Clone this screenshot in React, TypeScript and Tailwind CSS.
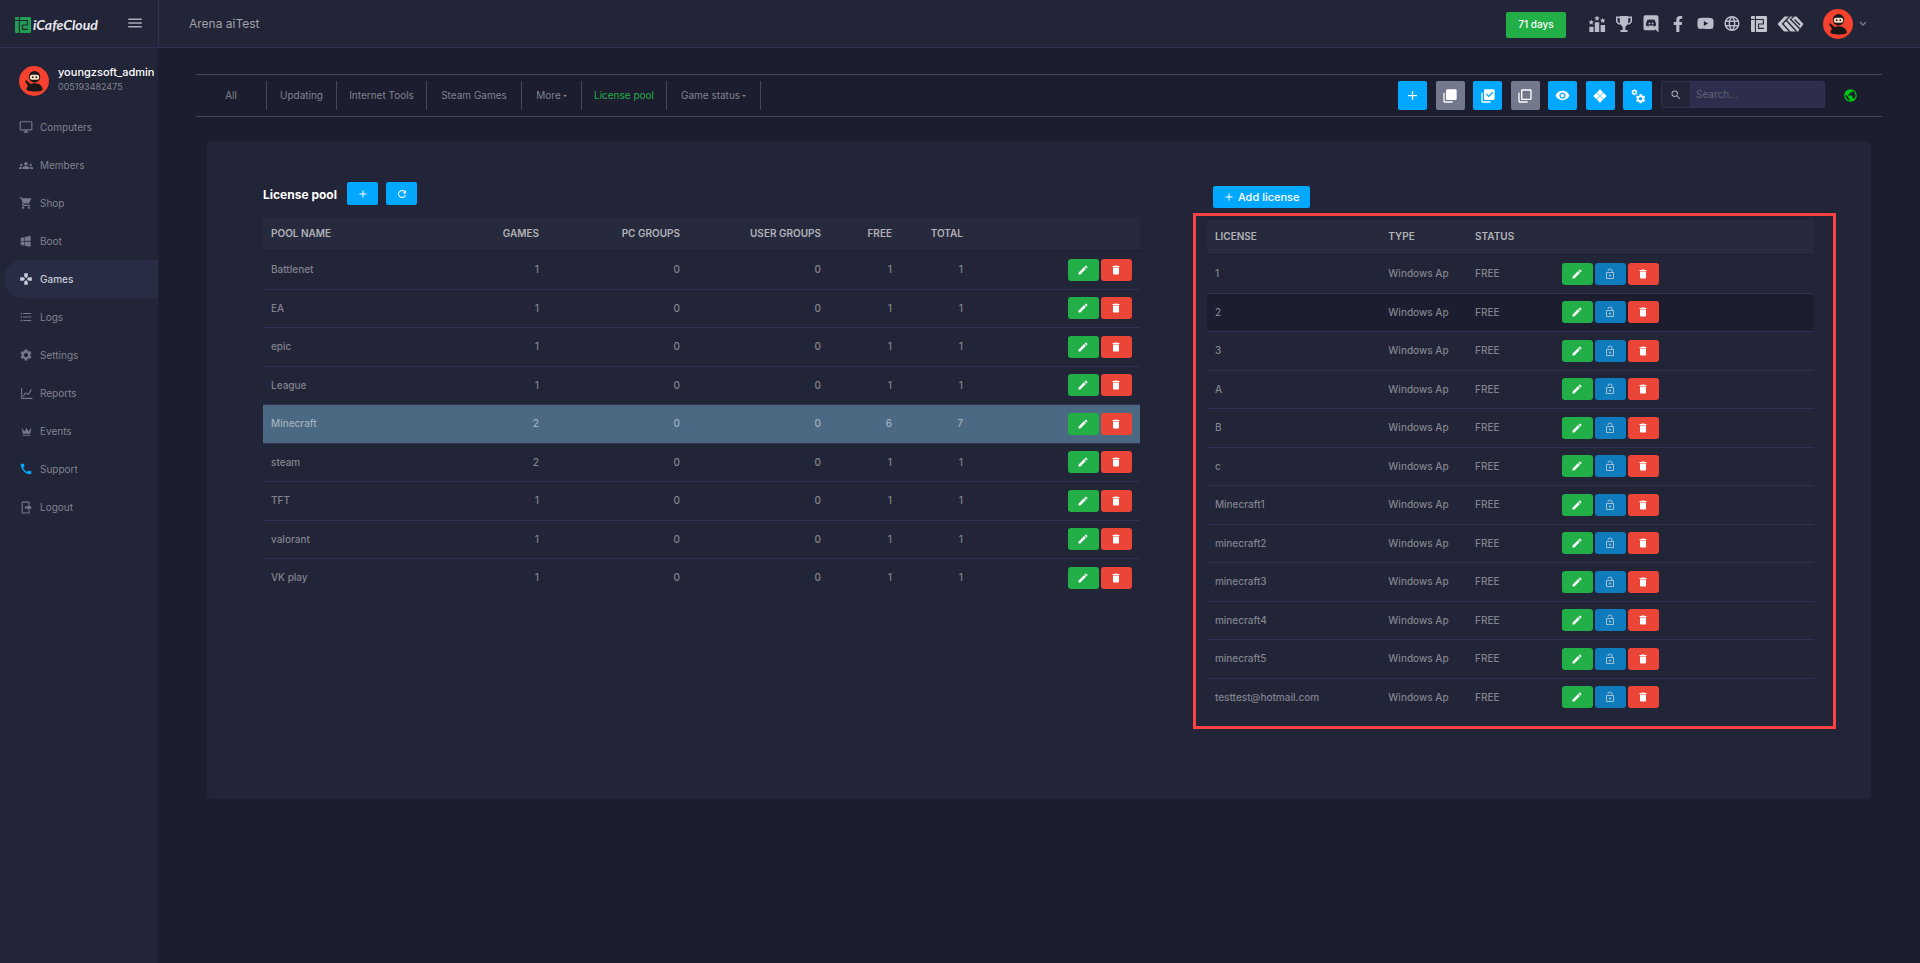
import React from 'react';
import {
  MdAdd, MdCall, MdDelete, MdGroups, MdLanguage, MdMenu, MdOutlineLockOpen, MdPublic, MdRefresh,
  MdSearch, MdSettings, MdShoppingCart, MdGames, MdFormatListBulleted, MdRemoveRedEye,
} from 'react-icons/md';
import { FaFacebookF, FaYoutube } from 'react-icons/fa';

const paths = {
  pencil:
    'M20.71,7.04C21.1,6.65 21.1,6 20.71,5.63L18.37,3.29C18,2.9 17.35,2.9 16.96,3.29L15.12,5.12L18.87,8.87M3,17.25V21H6.75L17.81,9.93L14.06,6.18L3,17.25Z',
  monitor:
    'M21,16H3V4H21M21,2H3C1.89,2 1,2.89 1,4V16A2,2 0 0,0 3,18H10V20H8V22H16V20H14V18H21A2,2 0 0,0 23,16V4C23,2.89 22.1,2 21,2Z',
  windows:
    'M3,12V6.75L9,5.43V11.91L3,12M20,3V11.75L10,11.9V5.21L20,3M3,13L9,13.09V19.9L3,18.75V13M20,13.25V22L10,20.09V13.1L20,13.25Z',
  chart:
    'M2,2H4V20H23V22H2V2M5,17L9.5,9.5L15,12.5L20,4L22,5L15.8,15.3L10.2,12.2L6.8,18Z',
  crown:
    'M5,16L3,5L8.5,12L12,5L15.5,12L21,5L19,16H5M19,19A1,1 0 0,1 18,20H6A1,1 0 0,1 5,19V18H19V19Z',
  logout:
    'M5,1H16A2,2 0 0,1 18,3V7H16V3H5V21H16V17H18V21A2,2 0 0,1 16,23H5A2,2 0 0,1 3,21V3A2,2 0 0,1 5,1M15,7L22,12L15,17V14H9V10H15Z',
  stackFilled:
    'M22,16A2,2 0 0,1 20,18H8C6.89,18 6,17.1 6,16V4C6,2.89 6.89,2 8,2H20A2,2 0 0,1 22,4V16M16,20V22H4A2,2 0 0,1 2,20V7H4V20H16Z',
  stackChecked:
    'M22,16A2,2 0 0,1 20,18H8C6.89,18 6,17.1 6,16V4C6,2.89 6.89,2 8,2H20A2,2 0 0,1 22,4V16M16,20V22H4A2,2 0 0,1 2,20V7H4V20H16M13,14L20,7L18.59,5.59L13,11.17L9.91,8.09L8.5,9.5L13,14Z',
  stackOutline:
    'M20,16V4H8V16H20M22,16A2,2 0 0,1 20,18H8C6.89,18 6,17.1 6,16V4C6,2.89 6.89,2 8,2H20A2,2 0 0,1 22,4V16M16,20V22H4A2,2 0 0,1 2,20V7H4V20H16Z',
  diamonds:
    'M12,0.600L17.400,6L12,11.400L6.600,6ZM12,12.600L17.400,18L12,23.400L6.600,18ZM6,6.600L11.400,12L6,17.400L0.600,12ZM18,6.600L23.400,12L18,17.400L12.600,12Z',
  cogs:
    'M15.9,18.45C17.25,18.45 18.35,17.35 18.35,16C18.35,14.65 17.25,13.55 15.9,13.55C14.54,13.55 13.45,14.65 13.45,16C13.45,17.35 14.54,18.45 15.9,18.45M21.1,16.68L22.58,17.84C22.71,17.95 22.75,18.13 22.66,18.29L21.26,20.71C21.17,20.86 21,20.92 20.83,20.86L19.09,20.16C18.73,20.44 18.33,20.67 17.91,20.85L17.64,22.7C17.62,22.87 17.47,23 17.3,23H14.5C14.32,23 14.18,22.87 14.15,22.7L13.89,20.85C13.46,20.67 13.07,20.44 12.71,20.16L10.96,20.86C10.81,20.92 10.62,20.86 10.54,20.71L9.14,18.29C9.05,18.13 9.09,17.95 9.22,17.84L10.7,16.68L10.65,16L10.7,15.31L9.22,14.16C9.09,14.05 9.05,13.86 9.14,13.71L10.54,11.29C10.62,11.13 10.81,11.07 10.96,11.13L12.71,11.84C13.07,11.56 13.46,11.32 13.89,11.15L14.15,9.29C14.18,9.13 14.32,9 14.5,9H17.3C17.47,9 17.62,9.13 17.64,9.29L17.91,11.15C18.33,11.32 18.73,11.56 19.09,11.84L20.83,11.13C21,11.07 21.17,11.13 21.26,11.29L22.66,13.71C22.75,13.86 22.71,14.05 22.58,14.16L21.1,15.31L21.15,16L21.1,16.68M6.69,8.07C7.56,8.07 8.26,7.37 8.26,6.5C8.26,5.63 7.56,4.92 6.69,4.92A1.58,1.58 0 0,0 5.11,6.5C5.11,7.37 5.82,8.07 6.69,8.07M10.03,6.94L11,7.68C11.07,7.75 11.09,7.87 11.03,7.97L10.13,9.53C10.08,9.63 9.96,9.67 9.86,9.63L8.74,9.18L8,9.62L7.81,10.81C7.79,10.92 7.7,11 7.59,11H5.79C5.67,11 5.58,10.92 5.56,10.81L5.4,9.62L4.64,9.18L3.52,9.63C3.41,9.67 3.3,9.63 3.24,9.53L2.34,7.97C2.28,7.87 2.31,7.75 2.39,7.68L3.34,6.94L3.31,6.5L3.34,6.06L2.39,5.32C2.31,5.25 2.28,5.13 2.34,5.03L3.24,3.47C3.3,3.37 3.41,3.33 3.52,3.37L4.63,3.82L5.4,3.38L5.56,2.19C5.58,2.08 5.67,2 5.79,2H7.59C7.7,2 7.79,2.08 7.81,2.19L8,3.38L8.74,3.82L9.86,3.37C9.96,3.33 10.08,3.37 10.13,3.47L11.03,5.03C11.09,5.13 11.07,5.25 11,5.32L10.03,6.06L10.06,6.5L10.03,6.94Z',
  discord:
    'M22,24L16.75,19L17.38,21H4.5A2.5,2.5 0 0,1 2,18.5V3.5A2.5,2.5 0 0,1 4.5,1H19.5A2.5,2.5 0 0,1 22,3.5V24M12,6.8C9.32,6.8 7.44,7.95 7.44,7.95C8.47,7.03 10.27,6.5 10.27,6.5L10.1,6.33C8.41,6.36 6.88,7.53 6.88,7.53C5.16,11.12 5.27,14.22 5.27,14.22C6.67,16.03 8.75,15.9 8.75,15.9L9.46,15C8.21,14.73 7.42,13.62 7.42,13.62C7.42,13.62 9.3,14.9 12,14.9C14.7,14.9 16.58,13.62 16.58,13.62C16.58,13.62 15.79,14.73 14.54,15L15.25,15.9C15.25,15.9 17.33,16.03 18.73,14.22C18.73,14.22 18.84,11.12 17.12,7.53C17.12,7.53 15.59,6.36 13.9,6.33L13.73,6.5C13.73,6.5 15.53,7.03 16.56,7.95C16.56,7.95 14.68,6.8 12,6.8M9.93,10.59C10.58,10.59 11.11,11.16 11.1,11.86C11.1,12.55 10.58,13.13 9.93,13.13C9.29,13.13 8.77,12.55 8.77,11.86C8.77,11.16 9.28,10.59 9.93,10.59M14.1,10.59C14.75,10.59 15.27,11.16 15.27,11.86C15.27,12.55 14.75,13.13 14.1,13.13C13.46,13.13 12.94,12.55 12.94,11.86C12.94,11.16 13.45,10.59 14.1,10.59Z',
};

function Glyph({ d, size = 14 }: { d: string; size?: number }) {
  return (
    <svg width={size} height={size} viewBox="0 0 24 24" fill="currentColor" aria-hidden="true">
      <path fillRule="evenodd" d={d} />
    </svg>
  );
}

function Ninja({ size = 30 }: { size?: number }) {
  return (
    <svg width={size} height={size} viewBox="0 0 30 30" className="shrink-0" aria-hidden="true">
      <circle cx="15" cy="15" r="15" fill="#f5412d" />
      <path d="M7 14l5 4.200c1-.6 2-.9 3.500-.9 5 0 8 3 8.300 6 0 1.500-3.500 2.200-8 2.200s-8.300-.7-8.300-2.200c0-1.200.6-2.400 1.500-3.400L6 15.200z" fill="#1a1718" />
      <circle cx="15.500" cy="10.800" r="5.700" fill="#1a1718" />
      <rect x="10.800" y="8.800" width="9.400" height="5" rx="2.300" fill="#f6dfc4" />
      <circle cx="13.700" cy="11.200" r="0.900" fill="#1a1718" />
      <circle cx="17.300" cy="11.200" r="0.900" fill="#1a1718" />
    </svg>
  );
}

/* Square monogram: a dotted stem beside a folded ribbon */
function Mark({ size, back, front }: { size: number; back: string; front: string }) {
  return (
    <svg width={size} height={size} viewBox="0 0 16 16" fill="none" aria-hidden="true">
      <rect width="16" height="16" rx="1" fill={back} />
      <path d="M0 3.500H3.600M4.400 0V16M4.400 3.500H12.400V8H7.500V12.400H13" stroke={front} strokeWidth="1.100" strokeLinejoin="round" />
    </svg>
  );
}

function Podium() {
  return (
    <svg width="20" height="20" viewBox="0 0 20 20" fill="currentColor" aria-hidden="true">
      <path d="M1.500 13h4.700v6h-4.700zM7.500 8h5v11h-5zM14 11h5v8h-5z" />
      <path d="M10 0.500l.9 2 2.200.2-1.700 1.500.5 2.200-1.900-1.200-1.900 1.200.5-2.200-1.700-1.500 2.200-.2zM3.600 5l.9 2 2.200.2-1.700 1.500.5 2.200-1.900-1.200-1.900 1.200.5-2.200L.5 7.200l2.200-.2zM16.400 3l.9 2 2.200.2-1.700 1.500.5 2.200-1.900-1.200-1.900 1.200.5-2.200-1.700-1.500 2.200-.2z" />
    </svg>
  );
}

function Trophy() {
  return (
    <svg width="18" height="18" viewBox="0 0 18 18" fill="currentColor" aria-hidden="true">
      <path fillRule="evenodd" d="M1 1.500h4V1h8v.5h4V7l-2.500 2.500h-2L10.300 12v3H12.500v2h-7v-2h2.200v-3L5.500 9.500h-2L1 7zM2.500 3v3.500l1.500 1.500h.9L4.600 3zM15.500 3h-2.100l-.3 5h.9l1.500-1.500z" />
    </svg>
  );
}

/* Interlaced ribbons in a wide hexagon */
function Weave() {
  return (
    <svg width="27" height="16" viewBox="0 0 27 16" fill="none" aria-hidden="true">
      <path d="M7.500 0.500H19.500L26.500 8L21 15.500H7L0.500 8z" fill="#c3c5cd" />
      <path d="M13 0L5.600 7.800L13 16M9.500 4.500L19.500 15.500M13 2.800L24 14M17 0L14.500 2.500M17.500 3.500L23 9" stroke="#222437" strokeWidth="1.300" />
    </svg>
  );
}

const menu: { label: string; icon: React.ReactNode; active?: boolean; tint?: string }[] = [
  { label: 'Computers', icon: <Glyph d={paths.monitor} /> },
  { label: 'Members', icon: <MdGroups size={15} /> },
  { label: 'Shop', icon: <MdShoppingCart size={14} /> },
  { label: 'Boot', icon: <Glyph d={paths.windows} /> },
  { label: 'Games', icon: <MdGames size={14} />, active: true },
  { label: 'Logs', icon: <MdFormatListBulleted size={14} /> },
  { label: 'Settings', icon: <MdSettings size={14} /> },
  { label: 'Reports', icon: <Glyph d={paths.chart} size={13} /> },
  { label: 'Events', icon: <Glyph d={paths.crown} size={13} /> },
  { label: 'Support', icon: <MdCall size={14} />, tint: 'text-[#02a8ff]' },
  { label: 'Logout', icon: <Glyph d={paths.logout} size={13} /> },
];

const tabs = [
  { label: 'All', width: 'w-[71px]' },
  { label: 'Updating', width: 'w-[70px]' },
  { label: 'Internet Tools', width: 'w-[90px]' },
  { label: 'Steam Games', width: 'w-[95px]' },
  { label: 'More', width: 'w-[60px]', menu: true },
  { label: 'License pool', width: 'w-[85px]', active: true },
  { label: 'Game status', width: 'w-[94px]', menu: true },
];

const tools = [
  { label: 'Add', icon: <MdAdd size={15} />, color: 'bg-[#02a8ff]' },
  { label: 'Select none', icon: <Glyph d={paths.stackFilled} size={16} />, color: 'bg-[#74788d]' },
  { label: 'Select all', icon: <Glyph d={paths.stackChecked} size={16} />, color: 'bg-[#02a8ff]' },
  { label: 'Invert', icon: <Glyph d={paths.stackOutline} size={16} />, color: 'bg-[#74788d]' },
  { label: 'View', icon: <MdRemoveRedEye size={15} />, color: 'bg-[#02a8ff]' },
  { label: 'Groups', icon: <Glyph d={paths.diamonds} />, color: 'bg-[#02a8ff]' },
  { label: 'Options', icon: <Glyph d={paths.cogs} size={16} />, color: 'bg-[#02a8ff]' },
];

const pools: [string, number, number, number, number, number][] = [
  ['Battlenet', 1, 0, 0, 1, 1],
  ['EA', 1, 0, 0, 1, 1],
  ['epic', 1, 0, 0, 1, 1],
  ['League', 1, 0, 0, 1, 1],
  ['Minecraft', 2, 0, 0, 6, 7],
  ['steam', 2, 0, 0, 1, 1],
  ['TFT', 1, 0, 0, 1, 1],
  ['valorant', 1, 0, 0, 1, 1],
  ['VK play', 1, 0, 0, 1, 1],
];

const licenses = [
  '1', '2', '3', 'A', 'B', 'c', 'Minecraft1', 'minecraft2', 'minecraft3', 'minecraft4', 'minecraft5',
  'testtest@hotmail.com',
];

function RowButton({ label, color, children }: { label: string; color: string; children: React.ReactNode }) {
  return (
    <button aria-label={label} className={`flex h-[22px] w-[31px] items-center justify-center rounded-[3px] text-white ${color}`}>
      {children}
    </button>
  );
}

const EditButton = () => (
  <RowButton label="Edit" color="bg-[#22af47]">
    <Glyph d={paths.pencil} size={12} />
  </RowButton>
);

const DeleteButton = () => (
  <RowButton label="Delete" color="bg-[#eb4538]">
    <MdDelete size={12} />
  </RowButton>
);

export default function App() {
  return (
    <div className="flex min-h-screen flex-col bg-[#1c1d2e] font-[Inter,sans-serif] text-[10px] text-[#81838e]">
      <header className="flex h-12 items-stretch border-b border-[#2e3152] bg-[#222437]">
        <div className="flex w-[159px] shrink-0 items-center border-r border-[#2e3152] pr-[14px] pl-[15px]">
          <a href="#home" className="flex items-center gap-[2px] pt-[2px]">
            <Mark size={16} back="#1f9d50" front="#222437" />
            <span className="font-[Lato,sans-serif] text-[14px] leading-4 font-bold text-[#e9e9ee] italic">iCafeCloud</span>
          </a>
          <button aria-label="Toggle menu" className="ml-auto pb-[2px] text-[#a9abb5]">
            <MdMenu size={18} />
          </button>
        </div>
        <h1 className="flex grow items-center pl-[30px] text-[12px] text-[#a0a1a8]">Arena aiTest</h1>
        <div className="flex items-center pr-[53px]">
          <button className="mt-[2px] h-[26px] w-[60px] rounded-[2px] bg-[#22af47] text-[10px] font-medium text-white">71 days</button>
          <nav className="ml-[22px] flex items-center gap-[9px] text-[#b9bdca]">
            <a href="#ranking" aria-label="Ranking" className="flex w-[18px] justify-center"><Podium /></a>
            <a href="#trophy" aria-label="Tournaments" className="flex w-[18px] justify-center"><Trophy /></a>
            <a href="#discord" aria-label="Discord" className="flex w-[18px] justify-center"><Glyph d={paths.discord} size={19} /></a>
            <a href="#facebook" aria-label="Facebook" className="flex w-[18px] justify-center"><FaFacebookF size={16} /></a>
            <a href="#youtube" aria-label="YouTube" className="flex w-[18px] justify-center"><FaYoutube size={17} /></a>
            <a href="#web" aria-label="Website" className="flex w-[18px] justify-center"><MdLanguage size={19} /></a>
            <a href="#cloud" aria-label="Cloud" className="flex w-[18px] justify-center"><Mark size={16} back="#c3c5cd" front="#222437" /></a>
            <a href="#partner" aria-label="Partner"><Weave /></a>
          </nav>
          <button aria-label="Account" className="ml-[19px] flex items-center gap-[6px]">
            <Ninja />
            <svg width="8" height="6" viewBox="0 0 8 6" fill="none" stroke="#74788d" strokeWidth="1.300" aria-hidden="true">
              <path d="M1 1l3 3 3-3" />
            </svg>
          </button>
        </div>
      </header>

      <div className="flex grow">
        <aside className="w-[158px] shrink-0 bg-[#222437]">
          <div className="flex gap-[9px] pt-[18px] pl-[19px]">
            <Ninja />
            <div>
              <p className="text-[11px] leading-[13px] font-medium text-white">youngzsoft_admin</p>
              <p className="text-[9px] leading-4">005193482475</p>
            </div>
          </div>
          <ul className="mt-3 pl-1">
            {menu.map((m) => (
              <li key={m.label}>
                <a
                  href={`#${m.label.toLowerCase()}`}
                  className={`flex h-[38px] items-center gap-[7px] rounded-l-[19px] pl-[15px] ${m.active ? 'bg-[#292c45] font-medium text-[#c9ccd8]' : ''}`}
                >
                  <span className={`flex w-[14px] justify-center ${m.tint ?? (m.active ? '' : 'text-[#74788d]')}`}>{m.icon}</span>
                  {m.label}
                </a>
              </li>
            ))}
          </ul>
        </aside>

        <main className="min-w-0 grow px-[38px] pt-[26px]">
          <div className="flex h-[43px] items-center border-y border-[#45475a]">
            <nav className="flex">
              {tabs.map((t) => (
                <a
                  key={t.label}
                  href={`#${t.label.toLowerCase().replace(' ', '-')}`}
                  className={`flex h-[29px] items-center justify-center gap-[2px] border-r border-[#45475a] whitespace-nowrap ${t.width} ${t.active ? 'text-[#22af47]' : ''}`}
                >
                  {t.label}
                  {t.menu && <span className="border-x-2 border-t-2 border-x-transparent border-t-current" />}
                </a>
              ))}
            </nav>
            <div className="ml-auto flex w-[254px] justify-between">
              {tools.map((t) => (
                <button key={t.label} aria-label={t.label} className={`flex h-[29px] w-[29px] items-center justify-center rounded-[2px] text-white ${t.color}`}>
                  {t.icon}
                </button>
              ))}
            </div>
            <div className="mr-[18px] mb-[2px] ml-[9px] flex h-[27px] w-[164px] rounded-[2px] border border-[#2e3152] bg-[#2c2e4c]">
              <label htmlFor="search" aria-label="Search" className="flex w-[29px] shrink-0 items-center justify-center border-r border-[#2e3152] bg-[#222437] text-[#a9abb5]">
                <MdSearch size={12} />
              </label>
              <input id="search" placeholder="Search..." className="w-0 grow bg-transparent px-[5px] text-[10px] text-[#c9ccd8] outline-none placeholder:text-[#626370]" />
            </div>
            <button aria-label="Server status" className="mr-6 text-[#00c614]">
              <MdPublic size={15} />
            </button>
          </div>

          <div className="mx-[11px] mt-6 grid min-h-[658px] grid-cols-[13fr_9fr] gap-[67px] rounded-[4px] bg-[#222437] pr-[57px] pl-14">
            <section className="pt-[41px]">
              <div className="flex gap-2">
                <h2 className="min-w-[76px] pt-[4px] text-[12px] leading-[18px] font-bold text-white">License pool</h2>
                <button aria-label="Add pool" className="flex h-[23px] w-[31px] items-center justify-center rounded-[2px] bg-[#02a8ff] text-white">
                  <MdAdd size={12} />
                </button>
                <button aria-label="Refresh" className="flex h-[23px] w-[31px] items-center justify-center rounded-[2px] bg-[#02a8ff] text-white">
                  <MdRefresh size={12} />
                </button>
              </div>
              <table className="mt-3 w-full table-fixed border-collapse">
                <thead>
                  <tr className="h-[33px] border-b border-[#1c1d2e] bg-[#27293c] text-right text-[#b1b2b8]">
                    <th className="w-[213px] px-2 text-left font-semibold">POOL NAME</th>
                    <th className="w-[71px] px-2 font-semibold">GAMES</th>
                    <th className="w-[141px] px-2 font-semibold">PC GROUPS</th>
                    <th className="w-[141px] px-2 font-semibold">USER GROUPS</th>
                    <th className="w-[71px] px-2 font-semibold">FREE</th>
                    <th className="w-[71px] px-2 font-semibold">TOTAL</th>
                    <th aria-label="Actions" />
                  </tr>
                </thead>
                <tbody>
                  {pools.map(([name, ...counts]) => (
                    <tr
                      key={name}
                      className={`h-[39px] border-b border-[#2e3152] font-medium last:border-0 even:h-[38px] ${name === 'Minecraft' ? 'bg-[#4b6982] text-[#9fb0be]' : ''}`}
                    >
                      <td className="px-2">{name}</td>
                      {counts.map((n, i) => (
                        <td key={i} className="px-2 text-right">{n}</td>
                      ))}
                      <td className="px-2">
                        <div className="flex justify-end gap-[2px]">
                          <EditButton />
                          <DeleteButton />
                        </div>
                      </td>
                    </tr>
                  ))}
                </tbody>
              </table>
            </section>

            <section className="pt-[45px]">
              <button className="ml-[6px] flex h-[22px] items-center gap-[3px] rounded-[2px] bg-[#02a8ff] px-[10px] text-[11px] font-medium text-white">
                <MdAdd size={12} />
                Add license
              </button>
              <div className="mt-[5px] mr-[-22px] ml-[-14px] border-[3px] border-[#ff4141] pt-1 pr-[19px] pb-[10px] pl-[11px]">
                <table className="w-full table-fixed border-collapse">
                  <thead>
                    <tr className="h-[34px] border-b border-[#1c1d2e] bg-[#27293c] text-left text-[#b1b2b8]">
                      <th className="w-2/7 px-2 font-semibold">LICENSE</th>
                      <th className="w-1/7 px-2 font-semibold">TYPE</th>
                      <th className="w-1/7 px-2 font-semibold">STATUS</th>
                      <th aria-label="Actions" />
                    </tr>
                  </thead>
                  <tbody>
                    {licenses.map((name) => (
                      <tr key={name} className={`h-[39px] border-b border-[#2e3152] font-medium last:border-0 even:h-[38px] ${name === '2' ? 'bg-[#1c1d2e]' : ''}`}>
                        <td className="px-2">{name}</td>
                        <td className="px-2 whitespace-nowrap">Windows Ap</td>
                        <td className="px-2">FREE</td>
                        <td className="px-2">
                          <div className="flex gap-[2px]">
                            <EditButton />
                            <RowButton label="Unlock" color="bg-[#0e7bbd]">
                              <MdOutlineLockOpen size={12} className="text-[#a3bfd4]" />
                            </RowButton>
                            <DeleteButton />
                          </div>
                        </td>
                      </tr>
                    ))}
                  </tbody>
                </table>
              </div>
            </section>
          </div>
        </main>
      </div>
    </div>
  );
}
